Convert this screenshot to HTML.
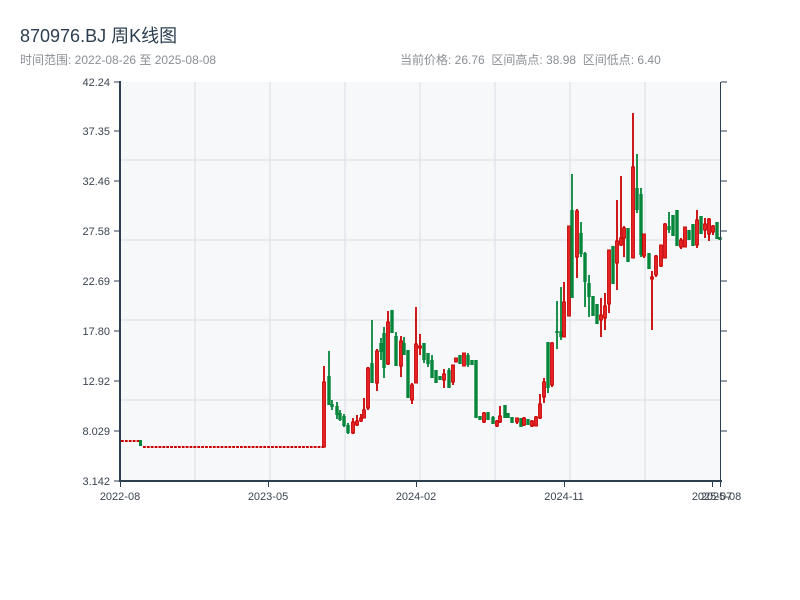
<!DOCTYPE html>
<html><head><meta charset="utf-8"><style>
body{margin:0;background:#fff;width:800px;height:600px;overflow:hidden;font-family:"Liberation Sans","Noto Sans CJK SC",sans-serif;}
.t{position:absolute;left:20px;top:22px;font-size:18px;color:#2c3e50;}
.s{position:absolute;left:20px;top:51px;font-size:12px;color:#8a8f94;}
.r{position:absolute;left:400px;top:51px;font-size:12px;color:#8a8f94;word-spacing:0;}
svg{position:absolute;left:0;top:0}
</style></head><body>
<div class="t">870976.BJ 周K线图</div>
<div class="s">时间范围: 2022-08-26 至 2025-08-08</div>
<div class="r">当前价格: 26.76&nbsp;&nbsp;区间高点: 38.98&nbsp;&nbsp;区间低点: 6.40</div>
<svg id="c" width="800" height="600" xmlns="http://www.w3.org/2000/svg" font-family="Liberation Sans, sans-serif" font-size="11" fill="#3c4550">
<rect x="120" y="82" width="601" height="399" fill="#f7f8fa"/>
<g stroke="#dfe2e8" stroke-width="1.2">
<line x1="120" y1="160" x2="720" y2="160"/><line x1="120" y1="240" x2="720" y2="240"/><line x1="120" y1="320" x2="720" y2="320"/><line x1="120" y1="400" x2="720" y2="400"/>
<line x1="195" y1="82" x2="195" y2="481"/><line x1="270" y1="82" x2="270" y2="481"/><line x1="345" y1="82" x2="345" y2="481"/><line x1="420" y1="82" x2="420" y2="481"/><line x1="495" y1="82" x2="495" y2="481"/><line x1="570" y1="82" x2="570" y2="481"/><line x1="645" y1="82" x2="645" y2="481"/>
</g>
<g id="k"></g>
<g stroke="#2c3e50" stroke-width="2" fill="none">
<line x1="120" y1="81" x2="120" y2="482"/><line x1="119" y1="481" x2="722" y2="481"/>
</g>
<g stroke="#2c3e50" stroke-width="1">
<line x1="720.5" y1="82" x2="720.5" y2="481"/>
<line x1="114" y1="82" x2="120" y2="82"/><line x1="114" y1="131" x2="120" y2="131"/><line x1="114" y1="181" x2="120" y2="181"/><line x1="114" y1="231" x2="120" y2="231"/><line x1="114" y1="281" x2="120" y2="281"/><line x1="114" y1="331" x2="120" y2="331"/><line x1="114" y1="381" x2="120" y2="381"/><line x1="114" y1="431" x2="120" y2="431"/><line x1="114" y1="481" x2="120" y2="481"/>
<line x1="721" y1="82" x2="727" y2="82"/><line x1="721" y1="131" x2="727" y2="131"/><line x1="721" y1="181" x2="727" y2="181"/><line x1="721" y1="231" x2="727" y2="231"/><line x1="721" y1="281" x2="727" y2="281"/><line x1="721" y1="331" x2="727" y2="331"/><line x1="721" y1="381" x2="727" y2="381"/><line x1="721" y1="431" x2="727" y2="431"/>
<line x1="120.5" y1="481" x2="120.5" y2="487"/><line x1="268.5" y1="481" x2="268.5" y2="487"/><line x1="416.5" y1="481" x2="416.5" y2="487"/><line x1="564.5" y1="481" x2="564.5" y2="487"/><line x1="712.5" y1="481" x2="712.5" y2="487"/><line x1="720.5" y1="481" x2="720.5" y2="487"/>
</g>
<g text-anchor="end">
<text x="110" y="86">42.24</text><text x="110" y="135">37.35</text><text x="110" y="185">32.46</text><text x="110" y="235">27.58</text><text x="110" y="285">22.69</text><text x="110" y="335">17.80</text><text x="110" y="385">12.92</text><text x="110" y="435">8.029</text><text x="110" y="485">3.142</text>
</g>
<g text-anchor="middle">
<text x="120" y="500">2022-08</text><text x="268" y="500">2023-05</text><text x="416" y="500">2024-02</text><text x="564" y="500">2024-11</text><text x="712" y="500">2025-07</text><text x="721" y="500">2025-08</text>
</g>
</svg>
<script>
var d=[
[324,366,447,382,447,'r'],[329,351,405,376,405,'g'],[332,400,410,404,407,'g'],[337,402,419,406,415,'g'],[340,410,421,413,420,'g'],[344,414,427,416,426,'g'],[348,423,434,425,433,'g'],[353,418,434,422,433,'r'],[357,415,426,421,425,'r'],[361,414,422,418,421,'r'],[364,398,418,410,418,'r'],[368,367,410,368,408,'r'],
[372,320,383,363,383,'g'],[377,349,391,351,383,'r'],[381,338,360,343,352,'g'],[384,327,378,333,368,'g'],[388,311,365,322,364,'r'],[392,310,333,310,333,'g'],[396,332,366,336,366,'g'],[401,336,377,341,366,'r'],[404,337,355,343,355,'g'],[408,350,398,350,398,'g'],[412,383,404,385,400,'r'],[416,307,383,344,383,'r'],[420,334,355,346,348,'r'],[424,343,363,343,360,'g'],[428,353,367,353,364,'g'],[432,355,378,360,378,'g'],[436,370,383,370,383,'g'],[440,376,380,376,380,'g'],[444,369,388,374,380,'r'],[449,368,388,370,388,'g'],[453,365,385,365,382,'r'],[456,358,362,358,362,'r'],[460,355,364,355,364,'g'],[464,353,366,353,366,'r'],[468,353,367,355,365,'g'],[472,360,365,360,365,'g'],[476,360,418,360,418,'g'],[480,416,420,416,420,'g'],[484,412,423,413,422,'r'],[488,412,420,412,420,'g'],[493,416,424,417,424,'g'],[497,420,427,421,426,'r'],
[500,406,423,416,422,'r'],[505,405,418,405,418,'g'],[508,413,418,413,418,'g'],[512,417,423,417,423,'g'],[517,418,424,418,422,'r'],[521,418,427,418,427,'g'],[524,417,426,418,425,'r'],[528,419,425,419,425,'g'],[532,420,427,421,426,'r'],[536,416,426,417,426,'r'],[540,394,419,404,418,'r'],[544,378,403,382,397,'r'],[548,342,393,342,388,'g'],[552,342,387,343,385,'r'],
[557,301,349,331,333,'g'],[561,287,340,331,337,'g'],[564,282,337,302,337,'r'],[569,226,316,226,316,'r'],[572,174,298,210,298,'g'],[577,209,278,211,257,'r'],[581,222,257,233,254,'g'],[585,252,307,253,282,'g'],[589,275,317,283,297,'g'],[593,296,316,296,316,'g'],[597,304,324,304,324,'g'],[601,298,337,315,320,'r'],[605,293,330,306,318,'r'],[609,250,313,250,304,'r'],[613,246,284,246,284,'g'],[617,200,290,241,263,'r'],[621,176,246,238,245,'r'],[624,226,257,228,238,'r'],[628,228,262,228,262,'g'],[633,113,258,167,258,'r'],[637,154,213,188,210,'g'],[641,188,257,194,255,'g'],[644,234,258,234,256,'r'],[649,253,269,253,269,'g'],[652,271,330,277,279,'r'],[656,255,277,256,275,'r'],[661,245,267,245,266,'r'],[665,223,258,224,258,'r'],[669,212,233,226,230,'g'],[673,215,236,215,236,'g'],[677,210,246,210,246,'g'],[681,238,249,240,247,'r'],[685,227,247,227,247,'r'],[689,230,240,230,240,'g'],[693,224,246,224,246,'g'],[697,210,248,220,245,'r'],[701,216,234,216,234,'g'],[705,218,238,224,230,'r'],[709,218,241,219,234,'r'],[713,225,235,226,232,'r'],[717,222,239,222,239,'g'],[720,237,240,237,240,'g']
];
var s='';
function C(x,wt,wb,bt,bb,c){
 if(c=='r'){s+='<line x1="'+x+'" y1="'+wt+'" x2="'+x+'" y2="'+wb+'" stroke="#c80000" stroke-width="1.8"/>';
  s+='<rect x="'+(x-1.4)+'" y="'+bt+'" width="2.8" height="'+Math.max(1,bb-bt)+'" fill="#e82828" stroke="#c80000" stroke-width="1"/>';}
 else{s+='<line x1="'+x+'" y1="'+wt+'" x2="'+x+'" y2="'+wb+'" stroke="#06863a" stroke-width="1.8"/>';
  s+='<rect x="'+(x-1.7)+'" y="'+bt+'" width="3.4" height="'+Math.max(1.5,bb-bt)+'" fill="#06863a"/>';}
}
for(var x=121;x<138;x+=3.9){s+='<rect x="'+x+'" y="440" width="2.8" height="2" fill="#c80000"/>';}
s+='<rect x="139" y="440" width="3" height="6" fill="#06863a"/>';
for(var x=143;x<322;x+=3.88){s+='<rect x="'+x+'" y="446" width="2.8" height="2" fill="#c80000"/>';}
d.forEach(function(a){C(a[0],a[1],a[2],a[3],a[4],a[5]);});
document.getElementById('k').innerHTML=s;
</script>
</body></html>
